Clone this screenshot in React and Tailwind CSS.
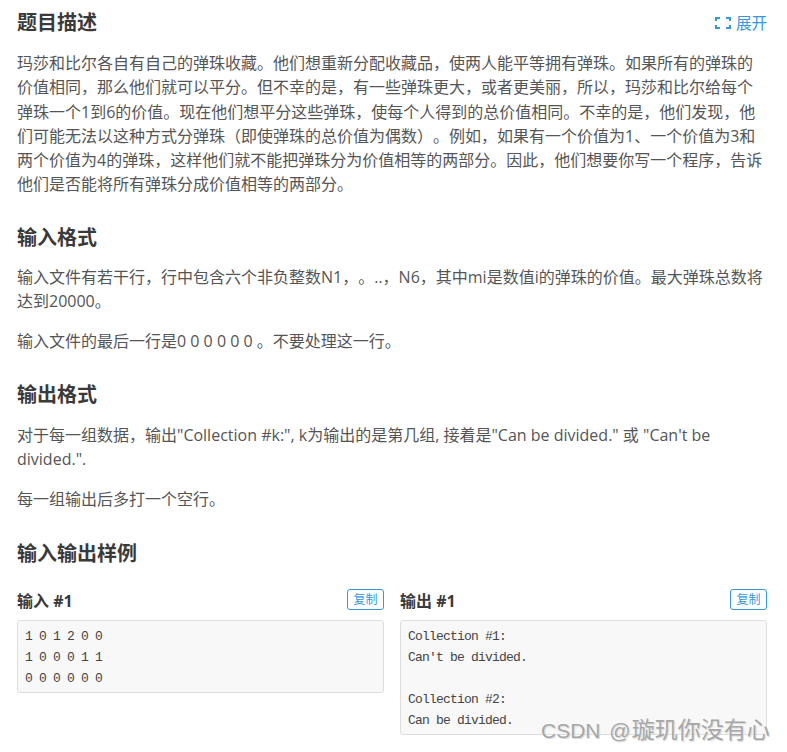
import React from "react";

const sections = [
  {
    title: "输入格式",
    gap: "mb-[14px]",
    paragraphs: [
      "输入文件有若干行，行中包含六个非负整数N1，。..，N6，其中mi是数值i的弹珠的价值。最大弹珠总数将达到20000。",
      "输入文件的最后一行是0 0 0 0 0 0 。不要处理这一行。",
    ],
  },
  {
    title: "输出格式",
    gap: "mb-[15px]",
    paragraphs: [
      "对于每一组数据，输出\"Collection #k:\", k为输出的是第几组, 接着是\"Can be divided.\" 或 \"Can't be divided.\".",
      "每一组输出后多打一个空行。",
    ],
  },
];

function Sample({ label, text }) {
  return (
    <div className="flex-1 min-w-0">
      <div className="flex items-center justify-between h-[22px] mb-[8px]">
        <span className="font-bold text-[16px] text-[#3a3a3a] mt-[2px]">{label}</span>
        <button className="w-[37px] h-[21px] border border-[#3498db] rounded-[3px] text-[#3498db] text-[12px] leading-[19px] bg-white -mt-[3px]">
          复制
        </button>
      </div>
      <pre className="bg-[#f8f8f8] border border-[#ddd] rounded-[3px] px-[7px] pt-[5px] pb-[3px] text-[13px] tracking-[-0.8px] leading-[21px] text-[#444] font-['Liberation_Mono','Noto_Sans_CJK_SC',monospace]">
        {text}
      </pre>
    </div>
  );
}

export default function App() {
  return (
    <div className="relative w-[787px] h-[752px] overflow-hidden bg-white pl-[17px] pr-[20px] pt-[10px] text-[#555] text-[16px] leading-[24.3px] [text-spacing-trim:space-all] font-['Open_Sans','Noto_Sans_CJK_SC',sans-serif]">
      <div className="flex items-center justify-between h-[27px]">
        <h2 className="font-bold text-[20px] text-[#3a3a3a]">题目描述</h2>
        <a className="flex items-center gap-[5px] text-[#3498db] text-[15.5px]">
          <svg width="16" height="12" viewBox="0 0 16 12" fill="none" stroke="#3498db" strokeWidth="2">
            <path d="M5 1H1V4M1 8V11H5M11 1H15V4M15 8V11H11" />
          </svg>
          展开
        </a>
      </div>
      <p className="mt-[14px]">
        玛莎和比尔各自有自己的弹珠收藏。他们想重新分配收藏品，使两人能平等拥有弹珠。如果所有的弹珠的价值相同，那么他们就可以平分。但不幸的是，有一些弹珠更大，或者更美丽，所以，玛莎和比尔给每个弹珠一个1到6的价值。现在他们想平分这些弹珠，使每个人得到的总价值相同。不幸的是，他们发现，他们可能无法以这种方式分弹珠（即使弹珠的总价值为偶数）。例如，如果有一个价值为1、一个价值为3和两个价值为4的弹珠，这样他们就不能把弹珠分为价值相等的两部分。因此，他们想要你写一个程序，告诉他们是否能将所有弹珠分成价值相等的两部分。
      </p>
      {sections.map((s) => (
        <div key={s.title}>
          <h2 className={`font-bold text-[20px] text-[#3a3a3a] mt-[27px] leading-[27px] ${s.gap}`}>{s.title}</h2>
          {s.paragraphs.map((p, i) => (
            <p key={i} className="mb-[16px]">{p}</p>
          ))}
        </div>
      ))}
      <h2 className="font-bold text-[20px] text-[#3a3a3a] mt-[28px] leading-[27px]">输入输出样例</h2>
      <div className="flex gap-[16px] mt-[23px]">
        <Sample label="输入 #1" text={"1 0 1 2 0 0\n1 0 0 0 1 1\n0 0 0 0 0 0"} />
        <Sample
          label="输出 #1"
          text={"Collection #1:\nCan't be divided.\n\nCollection #2:\nCan be divided."}
        />
      </div>
      <div className="absolute left-[541px] top-[714px] text-[23px] leading-[30px] text-[#a6a6a6] whitespace-nowrap [text-shadow:0_0_2px_#fff,1px_1px_1px_#ccc]">
        <span className="text-[21px] font-['Liberation_Sans',sans-serif]">
          CSDN <span className="ml-[3px] mr-[1px]">@</span>
        </span>
        璇玑你没有心
      </div>
    </div>
  );
}
